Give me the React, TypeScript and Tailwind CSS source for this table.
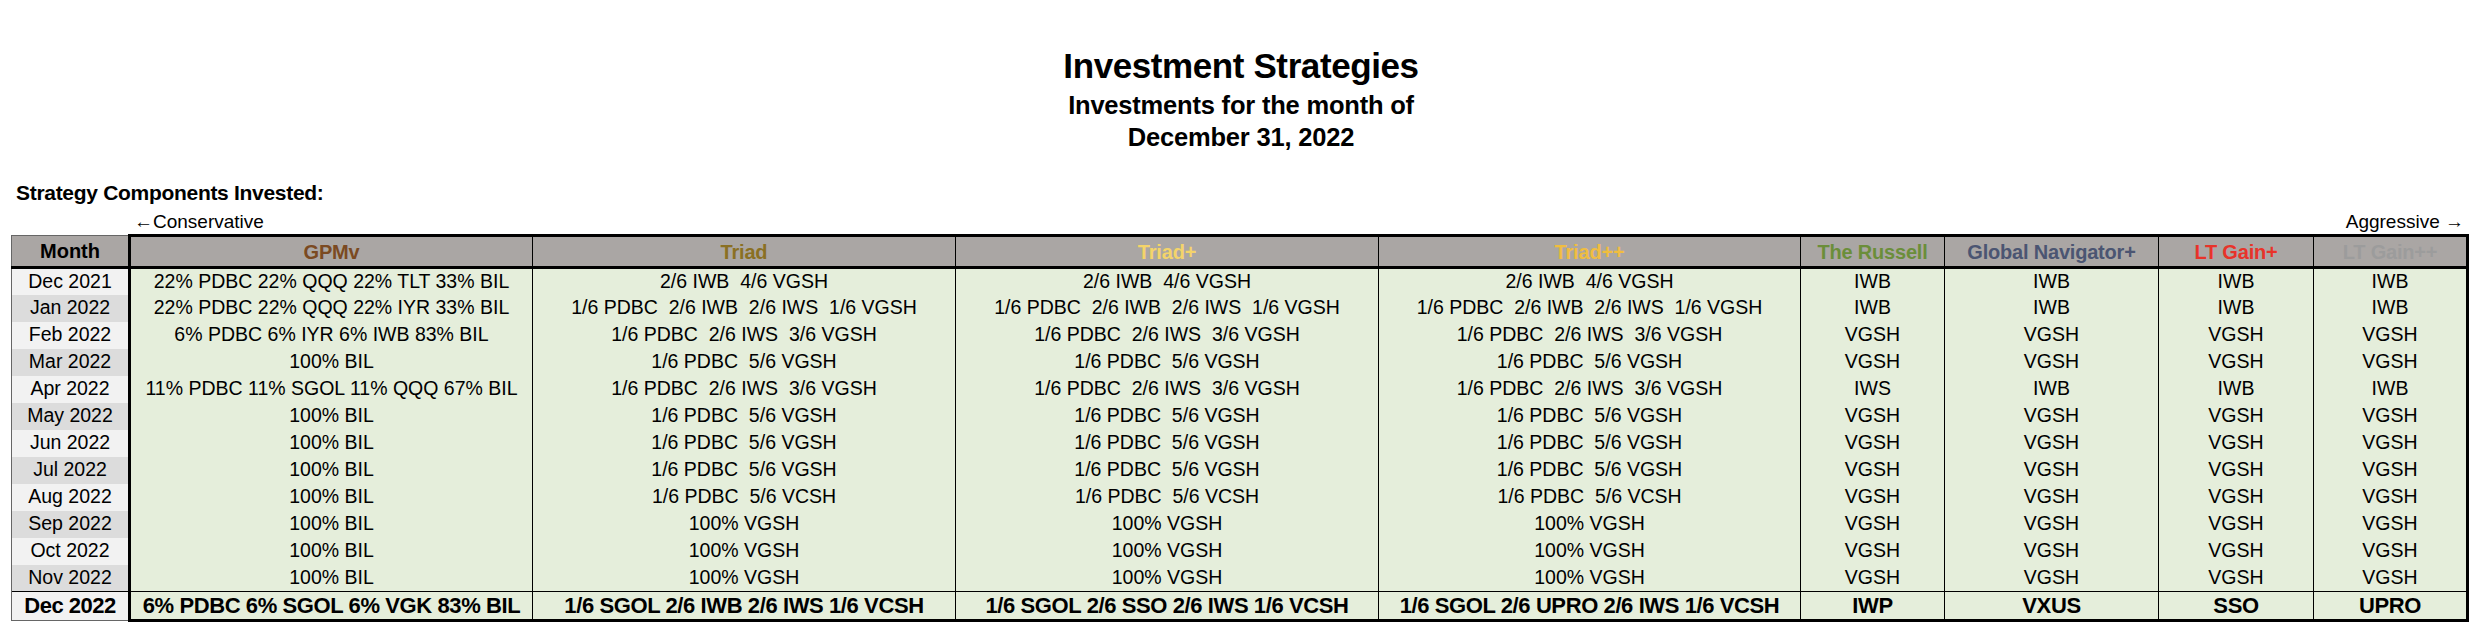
import React from 'react';

type Col = { name: string; color: string; width: number };

const cols: Col[] = [
  { name: 'GPMv', color: 'text-[#7b4a22]', width: 403 },
  { name: 'Triad', color: 'text-[#8a7023]', width: 423 },
  { name: 'Triad+', color: 'text-[#f4d46a]', width: 423 },
  { name: 'Triad++', color: 'text-[#f0bd40]', width: 422 },
  { name: 'The Russell', color: 'text-[#6b8e3a]', width: 144 },
  { name: 'Global Navigator+', color: 'text-[#4b5572]', width: 214 },
  { name: 'LT Gain+', color: 'text-[#e8332a]', width: 155 },
  { name: 'LT Gain++', color: 'text-[#9c9c9c]', width: 154 },
];

const t4 = (a: string, b: string, c: string, d: string) => [a, b, c, d];
const tri = (s: string) => [s, s, s];

const rows: string[][] = [
  ['Dec 2021', '22% PDBC 22% QQQ 22% TLT 33% BIL', ...tri('2/6 IWB  4/6 VGSH'), ...t4('IWB', 'IWB', 'IWB', 'IWB')],
  ['Jan 2022', '22% PDBC 22% QQQ 22% IYR 33% BIL', ...tri('1/6 PDBC  2/6 IWB  2/6 IWS  1/6 VGSH'), ...t4('IWB', 'IWB', 'IWB', 'IWB')],
  ['Feb 2022', '6% PDBC 6% IYR 6% IWB 83% BIL', ...tri('1/6 PDBC  2/6 IWS  3/6 VGSH'), ...t4('VGSH', 'VGSH', 'VGSH', 'VGSH')],
  ['Mar 2022', '100% BIL', ...tri('1/6 PDBC  5/6 VGSH'), ...t4('VGSH', 'VGSH', 'VGSH', 'VGSH')],
  ['Apr 2022', '11% PDBC 11% SGOL 11% QQQ 67% BIL', ...tri('1/6 PDBC  2/6 IWS  3/6 VGSH'), ...t4('IWS', 'IWB', 'IWB', 'IWB')],
  ['May 2022', '100% BIL', ...tri('1/6 PDBC  5/6 VGSH'), ...t4('VGSH', 'VGSH', 'VGSH', 'VGSH')],
  ['Jun 2022', '100% BIL', ...tri('1/6 PDBC  5/6 VGSH'), ...t4('VGSH', 'VGSH', 'VGSH', 'VGSH')],
  ['Jul 2022', '100% BIL', ...tri('1/6 PDBC  5/6 VGSH'), ...t4('VGSH', 'VGSH', 'VGSH', 'VGSH')],
  ['Aug 2022', '100% BIL', ...tri('1/6 PDBC  5/6 VCSH'), ...t4('VGSH', 'VGSH', 'VGSH', 'VGSH')],
  ['Sep 2022', '100% BIL', ...tri('100% VGSH'), ...t4('VGSH', 'VGSH', 'VGSH', 'VGSH')],
  ['Oct 2022', '100% BIL', ...tri('100% VGSH'), ...t4('VGSH', 'VGSH', 'VGSH', 'VGSH')],
  ['Nov 2022', '100% BIL', ...tri('100% VGSH'), ...t4('VGSH', 'VGSH', 'VGSH', 'VGSH')],
];

const current = [
  'Dec 2022',
  '6% PDBC 6% SGOL 6% VGK 83% BIL',
  '1/6 SGOL 2/6 IWB 2/6 IWS 1/6 VCSH',
  '1/6 SGOL 2/6 SSO 2/6 IWS 1/6 VCSH',
  '1/6 SGOL 2/6 UPRO 2/6 IWS 1/6 VCSH',
  'IWP',
  'VXUS',
  'SSO',
  'UPRO',
];

export default function App() {
  return (
    <div className="w-[2482px] h-[630px] bg-white text-black font-['Liberation_Sans',Arial,sans-serif] overflow-hidden">
      {/* title block */}
      <div className="pt-[48px] flex flex-col items-center font-bold">
        <div className="text-[35px] leading-[36px] tracking-[-0.4px]">Investment Strategies</div>
        <div className="mt-[5px] text-[25.5px] leading-[32px] tracking-[-0.2px]">Investments for the month of</div>
        <div className="text-[25.5px] leading-[32px] tracking-[-0.2px]">December 31, 2022</div>
      </div>

      <div className="mt-[28px] pl-[16px] text-[21px] leading-[24px] font-bold tracking-[-0.3px]">
        Strategy Components Invested:
      </div>

      <div className="mt-[7px] h-[20px] flex justify-between pl-[134px] pr-[18px] text-[19px] leading-[20px]">
        <span>←Conservative</span>
        <span>Aggressive →</span>
      </div>

      <table className="mt-[2px] ml-[11px] w-[2456px] table-fixed border-collapse">
        <colgroup>
          <col className="w-[118px]" />
          {cols.map((c) => (
            <col key={c.name} style={{ width: c.width }} />
          ))}
        </colgroup>
        <thead>
          <tr className="h-[32px] bg-[#aaa6a4] text-[20px] font-bold">
            <th className="p-0 border-t border-l border-[#666] border-b-[3px] border-b-black border-r-[3px] border-r-black">Month</th>
            {cols.map((c, i) => (
              <th
                key={c.name}
                className={`p-0 leading-none tracking-[-0.2px] border-t-[3px] border-t-black border-b-[3px] border-b-black ${c.color} ${
                  i === cols.length - 1 ? 'border-r-[3px] border-r-black' : 'border-r-[1.5px] border-r-black'
                }`}
              >
                {c.name}
              </th>
            ))}
          </tr>
        </thead>
        <tbody className="text-[19.5px]">
          {rows.map((r, ri) => (
            <tr key={r[0]} className="h-[27px]">
              <td
                className={`p-0 text-center leading-none border-l border-[#666] border-r-[3px] border-r-black ${
                  ri % 2 === 0 ? 'bg-[#f2f2f2]' : 'bg-[#dcdcdc]'
                }`}
              >
                {r[0]}
              </td>
              {r.slice(1).map((v, ci) => (
                <td
                  key={ci}
                  className={`p-0 text-center leading-none whitespace-pre bg-[#e5eedb] ${
                    ci === cols.length - 1 ? 'border-r-[3px] border-r-black' : 'border-r-[1.5px] border-r-black'
                  }`}
                >
                  {v}
                </td>
              ))}
            </tr>
          ))}
          <tr className="h-[29px] text-[22px] font-bold">
            <td className="p-0 text-center leading-none tracking-[-0.5px] bg-[#f2f2f2] border-t-[1.5px] border-t-black border-l border-[#666] border-b border-b-[#666] border-r-[3px] border-r-black">
              {current[0]}
            </td>
            {current.slice(1).map((v, ci) => (
              <td
                key={ci}
                className={`p-0 text-center leading-none tracking-[-0.4px] bg-[#e5eedb] border-t-[1.5px] border-t-black border-b-[3px] border-b-black ${
                  ci === cols.length - 1 ? 'border-r-[3px] border-r-black' : 'border-r-[1.5px] border-r-black'
                }`}
              >
                {v}
              </td>
            ))}
          </tr>
        </tbody>
      </table>
    </div>
  );
}
